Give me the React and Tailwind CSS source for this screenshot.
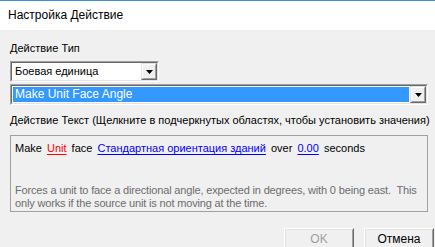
import React from 'react';

function Arrow() {
    return (
        <svg width="7" height="4" viewBox="0 0 7 4" className="block">
            <path d="M0 0H7L3.5 4Z" fill="#000" />
        </svg>
    );
}

function Combo({ width, selected, children }) {
    return (
        <div className={`${width} h-[21px] border border-t-[#a0a0a0] border-l-[#a0a0a0] border-r-white border-b-white`}>
            <div className="flex h-full border border-t-[#696969] border-l-[#696969] border-r-[#e3e3e3] border-b-[#e3e3e3] bg-white">
                <div className={`flex-1 flex items-center pl-[2px] m-[1px] ${selected ? 'bg-[#3399ff] text-white text-[12px]' : 'text-black'}`}>
                    {children}
                </div>
                <div className="w-[16px] h-full border border-t-[#e3e3e3] border-l-[#e3e3e3] border-r-[#696969] border-b-[#696969] bg-[#f0f0f0]">
                    <div className="h-full flex items-center justify-center border border-t-white border-l-white border-r-[#a0a0a0] border-b-[#a0a0a0]">
                        <Arrow />
                    </div>
                </div>
            </div>
        </div>
    );
}

function Button({ disabled, children }) {
    return (
        <div className="w-[70px] h-[23px] border border-t-white border-l-white border-r-[#696969] border-b-[#696969] bg-[#f0f0f0]">
            <div className={`h-full flex items-center justify-center border border-t-[#e3e3e3] border-l-[#e3e3e3] border-r-[#a0a0a0] border-b-[#a0a0a0] ${disabled ? 'text-[#a0a0a0]' : 'text-black'}`}>
                {children}
            </div>
        </div>
    );
}

export default function App() {
    return (
        <div className="w-[435px] h-[247px] overflow-hidden bg-[#f0f0f0] font-['Liberation_Sans',Arial,sans-serif] text-[11px] leading-[13px] text-black">
            <div className="h-[30px] bg-white border-t border-t-[#3c8fd8] flex items-center pl-[8px] pb-[1px]">
                <span className="text-[12px] leading-[16px]">Настройка Действие</span>
            </div>
            <div className="flex flex-col pl-[10px] pt-[12px]">
                <div>Действие Тип</div>
                <div className="mt-[6px]">
                    <Combo width="w-[149px]">Боевая единица</Combo>
                </div>
                <div className="mt-[2px]">
                    <Combo width="w-[418px]" selected>Make Unit Face Angle</Combo>
                </div>
                <div className="mt-[9px] whitespace-nowrap">Действие Текст (Щелкните в подчеркнутых областях, чтобы установить значения)</div>
                <div className="mt-[8px] w-[418px] h-[77px] border border-[#a0a0a0] pl-[4px] pt-[6px]">
                    <div className="whitespace-pre">
                        {'Make '}
                        <span className="mx-[2px] text-[#ff0000] underline underline-offset-2">Unit</span>
                        {' face '}
                        <span className="mx-[2px] text-[#0000ff] underline underline-offset-2">Стандартная ориентация зданий</span>
                        {' over '}
                        <span className="mx-[2px] text-[#0000ff] underline underline-offset-2">0.00</span>
                        {' seconds'}
                    </div>
                    <div className="mt-[29px] text-[#6d6d6d] whitespace-pre tracking-[-0.16px]">
                        <div>Forces a unit to face a directional angle, expected in degrees, with 0 being east.  This</div>
                        <div>only works if the source unit is not moving at the time.</div>
                    </div>
                </div>
                <div className="mt-[16px] flex justify-end gap-[10px] pr-[1px] text-[12px]">
                    <Button disabled>OK</Button>
                    <Button>Отмена</Button>
                </div>
            </div>
        </div>
    );
}
